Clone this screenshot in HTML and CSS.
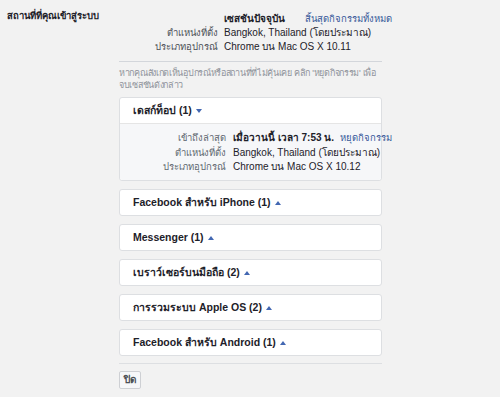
FILE: index.html
```html
<!DOCTYPE html>
<html lang="th">
<head>
    <meta charset="UTF-8">
    <meta name="viewport" content="width=device-width, initial-scale=1.0">
    <title>สถานที่ที่คุณเข้าสู่ระบบ</title>
    <link rel="stylesheet" href="styles.css">
</head>
<body>

    <div class="settings-row">
        <!-- หัวข้อด้านซ้าย -->
        <div class="settings-label">สถานที่ที่คุณเข้าสู่ระบบ</div>

        <div class="settings-content">
            <!-- เซสชันปัจจุบัน -->
            <div class="current-session">
                <div class="info-row">
                    <span class="info-key"></span>
                    <span class="info-value strong">เซสชันปัจจุบัน</span>
                    <a href="#" class="info-link">สิ้นสุดกิจกรรมทั้งหมด</a>
                </div>
                <div class="info-row">
                    <span class="info-key">ตำแหน่งที่ตั้ง</span>
                    <span class="info-value">Bangkok, Thailand (โดยประมาณ)</span>
                </div>
                <div class="info-row">
                    <span class="info-key">ประเภทอุปกรณ์</span>
                    <span class="info-value">Chrome บน Mac OS X 10.11</span>
                </div>
            </div>

            <p class="help-text">หากคุณสังเกตเห็นอุปกรณ์หรือสถานที่ที่ไม่คุ้นเคย คลิก 'หยุดกิจกรรม' เพื่อ จบเซสชันดังกล่าว</p>

            <!-- กลุ่มอุปกรณ์ -->
            <div class="device-group open">
                <div class="group-header">เดสก์ท็อป (1) <span class="arrow down"></span></div>
                <div class="group-body">
                    <div class="info-row">
                        <span class="info-key">เข้าถึงล่าสุด</span>
                        <span class="info-value strong">เมื่อวานนี้ เวลา 7:53 น.</span>
                        <a href="#" class="info-link">หยุดกิจกรรม</a>
                    </div>
                    <div class="info-row">
                        <span class="info-key">ตำแหน่งที่ตั้ง</span>
                        <span class="info-value">Bangkok, Thailand (โดยประมาณ)</span>
                    </div>
                    <div class="info-row">
                        <span class="info-key">ประเภทอุปกรณ์</span>
                        <span class="info-value">Chrome บน Mac OS X 10.12</span>
                    </div>
                </div>
            </div>

            <div class="device-group">
                <div class="group-header">Facebook สำหรับ iPhone (1) <span class="arrow"></span></div>
            </div>
            <div class="device-group">
                <div class="group-header">Messenger (1) <span class="arrow"></span></div>
            </div>
            <div class="device-group">
                <div class="group-header">เบราว์เซอร์บนมือถือ (2) <span class="arrow"></span></div>
            </div>
            <div class="device-group">
                <div class="group-header">การรวมระบบ Apple OS (2) <span class="arrow"></span></div>
            </div>
            <div class="device-group">
                <div class="group-header">Facebook สำหรับ Android (1) <span class="arrow"></span></div>
            </div>

            <div class="footer">
                <button class="close-button">ปิด</button>
            </div>
        </div>
    </div>

</body>
</html>
```

FILE: styles.css
```css
/* พื้นฐาน */
body {
    margin: 0;
    padding: 0;
    background: #f2f2f2;
    color: #1d2129;
    font-family: Helvetica, "Liberation Sans", Arial, sans-serif;
    font-size: 10px;
}

.settings-row {
    display: flex;
    padding-top: 9px;
}

.settings-label {
    width: 112px;
    padding-left: 7px;
    font-weight: bold;
    font-size: 9.5px;
    line-height: 14px;
}

.settings-content {
    width: 263px;
}

/* แถวข้อมูล */
.current-session {
    padding-top: 3px;
    padding-bottom: 7px;
}

.info-row {
    display: flex;
    line-height: 14px;
    white-space: nowrap;
}

.info-row > * {
    flex-shrink: 0;
}

.info-key {
    width: 99px;
    text-align: right;
    color: #4b4f56;
    font-size: 9.5px;
}

.info-value {
    margin-left: 6px;
    margin-right: 4px;
    min-width: 77px;
}

.strong {
    font-weight: bold;
}

.info-link {
    color: #365899;
    text-decoration: none;
    font-size: 9.5px;
}

.help-text {
    margin: 0 0 6px;
    padding-top: 5px;
    border-top: 1px solid #d3d6db;
    color: #90949c;
    font-size: 9px;
    letter-spacing: -0.3px;
    line-height: 12px;
}

/* การ์ดกลุ่มอุปกรณ์ */
.device-group {
    background: #fff;
    border: 1px solid #dddfe2;
    border-radius: 3px;
    margin-bottom: 8px;
}

.group-header {
    height: 25px;
    line-height: 25px;
    padding-left: 13px;
    font-weight: bold;
    font-size: 10.5px;
    color: #1d2129;
}

.arrow {
    display: inline-block;
    width: 0;
    height: 0;
    margin-left: 1px;
    vertical-align: middle;
    border-left: 3.5px solid transparent;
    border-right: 3.5px solid transparent;
    border-bottom: 4px solid #4267b2;
}

.arrow.down {
    border-bottom: 0;
    border-top: 4px solid #4267b2;
}

.group-body {
    background: #f6f7f9;
    border-top: 1px solid #e5e5e5;
    padding: 7px 0 5px;
    border-radius: 0 0 3px 3px;
}

.group-body .info-row {
    line-height: 14.5px;
}

.group-body .info-key {
    width: 106px;
    color: #606770;
}

.group-body .info-value {
    margin-left: 7px;
    margin-right: 6px;
    min-width: 83px;
}

/* ปุ่มปิด */
.footer {
    border-top: 1px solid #dddfe2;
    margin-top: -1px;
    padding-top: 7px;
}

.close-button {
    height: 18px;
    padding: 0 4px;
    font-family: inherit;
    font-size: 10px;
    font-weight: bold;
    color: #4b4f56;
    background: #f6f7f9;
    border: 1px solid #ced0d4;
    border-radius: 2px;
}
```
